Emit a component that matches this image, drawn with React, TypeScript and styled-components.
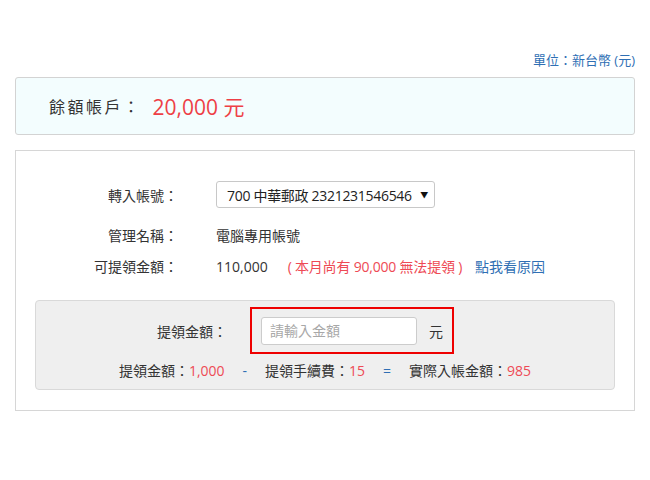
import React from "react";
import styled, { createGlobalStyle } from "styled-components";

const GlobalStyle = createGlobalStyle`
    html, body {
        margin: 0;
        padding: 0;
        background: #ffffff;
    }
    body {
        font-family: "Open Sans", "Noto Sans CJK TC", sans-serif;
        color: #333333;
    }
`;

const Page = styled.div`
    width: 620px;
    padding: 50px 15px 0 15px;
    display: flex;
    flex-direction: column;
`;

const UnitNote = styled.div`
    height: 20px;
    line-height: 20px;
    text-align: right;
    font-size: 13px;
    color: #2f6fb4;
    margin-bottom: 7px;
`;

const BalanceBox = styled.div`
    height: 56px;
    border: 1px solid #d3d3d3;
    border-radius: 3px;
    background: #f3fdfe;
    display: flex;
    align-items: center;
    padding-left: 33px;
    gap: 11px;
`;

const BalanceLabel = styled.span`
    font-size: 16px;
    letter-spacing: 2.5px;
    color: #333333;
`;

const BalanceValue = styled.span`
    font-size: 21px;
    color: #ee3f46;
`;

const Panel = styled.div`
    margin-top: 15px;
    border: 1px solid #d6d6d6;
    padding: 30px 19px 20px 19px;
    display: flex;
    flex-direction: column;
`;

const Row = styled.div<{ $height: number; $gap?: number }>`
    display: grid;
    grid-template-columns: 143px auto;
    column-gap: 38px;
    align-items: center;
    height: ${({ $height }) => $height}px;
    margin-bottom: ${({ $gap }) => $gap ?? 0}px;
    font-size: 14px;
`;

const Label = styled.span`
    text-align: right;
    color: #333333;
`;

const Value = styled.span`
    color: #333333;
    display: flex;
    align-items: center;
`;

const SelectBox = styled.div`
    width: 201px;
    height: 25px;
    border: 1px solid #c8c8c8;
    border-radius: 3px;
    background: #ffffff;
    display: flex;
    align-items: center;
    justify-content: space-between;
    padding: 0 6px 0 10px;
    font-size: 14px;
    letter-spacing: -0.3px;
    color: #222222;
`;

const Caret = styled.span`
    font-size: 8px;
    color: #111111;
`;

const Warn = styled.span`
    color: #ee4a55;
    margin-left: 20px;
    letter-spacing: -0.2px;
`;

const Link = styled.a`
    color: #2f6fb4;
    margin-left: 13px;
    text-decoration: none;
    cursor: pointer;
`;

const CalcBox = styled.div`
    margin-top: 23px;
    height: 88px;
    background: #efefef;
    border: 1px solid #d9d9d9;
    border-radius: 4px;
    display: flex;
    flex-direction: column;
    align-items: stretch;
`;

const AmountRow = styled.div`
    display: flex;
    align-items: center;
    margin-top: 6px;
    font-size: 14px;
`;

const AmountLabel = styled.span`
    width: 191px;
    text-align: right;
    margin-right: 23px;
    color: #333333;
`;

const Highlight = styled.div`
    border: 2px solid #ee0000;
    height: 43px;
    padding: 0 9px;
    display: flex;
    align-items: center;
    gap: 12px;
`;

const AmountInput = styled.input`
    width: 156px;
    height: 28px;
    box-sizing: border-box;
    border: 1px solid #cccccc;
    border-radius: 3px;
    background: #ffffff;
    padding: 0 8px;
    font-family: "Open Sans", "Noto Sans CJK TC", sans-serif;
    font-size: 14px;
    outline: none;
    &::placeholder {
        color: #a8a8a8;
    }
`;

const Summary = styled.div`
    margin-top: 6px;
    height: 20px;
    display: flex;
    justify-content: center;
    align-items: center;
    font-size: 14px;
    color: #333333;
`;

const Num = styled.span`
    color: #ee4a55;
`;

const Op = styled.span`
    color: #2f6fb4;
    margin: 0 18px;
`;

export default function App() {
    return (
        <>
            <GlobalStyle />
            <Page>
                <UnitNote>單位：新台幣 (元)</UnitNote>
                <BalanceBox>
                    <BalanceLabel>餘額帳戶：</BalanceLabel>
                    <BalanceValue>20,000 元</BalanceValue>
                </BalanceBox>
                <Panel>
                    <Row $height={27} $gap={16}>
                        <Label>轉入帳號：</Label>
                        <SelectBox>
                            <span>700 中華郵政 2321231546546</span>
                            <Caret>▼</Caret>
                        </SelectBox>
                    </Row>
                    <Row $height={22} $gap={9}>
                        <Label>管理名稱：</Label>
                        <Value>電腦專用帳號</Value>
                    </Row>
                    <Row $height={22}>
                        <Label>可提領金額：</Label>
                        <Value>
                            110,000
                            <Warn>( 本月尚有 90,000 無法提領 )</Warn>
                            <Link>點我看原因</Link>
                        </Value>
                    </Row>
                    <CalcBox>
                        <AmountRow>
                            <AmountLabel>提領金額：</AmountLabel>
                            <Highlight>
                                <AmountInput placeholder="請輸入金額" />
                                <span>元</span>
                            </Highlight>
                        </AmountRow>
                        <Summary>
                            提領金額：<Num>1,000</Num>
                            <Op>-</Op>
                            提領手續費：<Num>15</Num>
                            <Op>=</Op>
                            實際入帳金額：<Num>985</Num>
                        </Summary>
                    </CalcBox>
                </Panel>
            </Page>
        </>
    );
}
